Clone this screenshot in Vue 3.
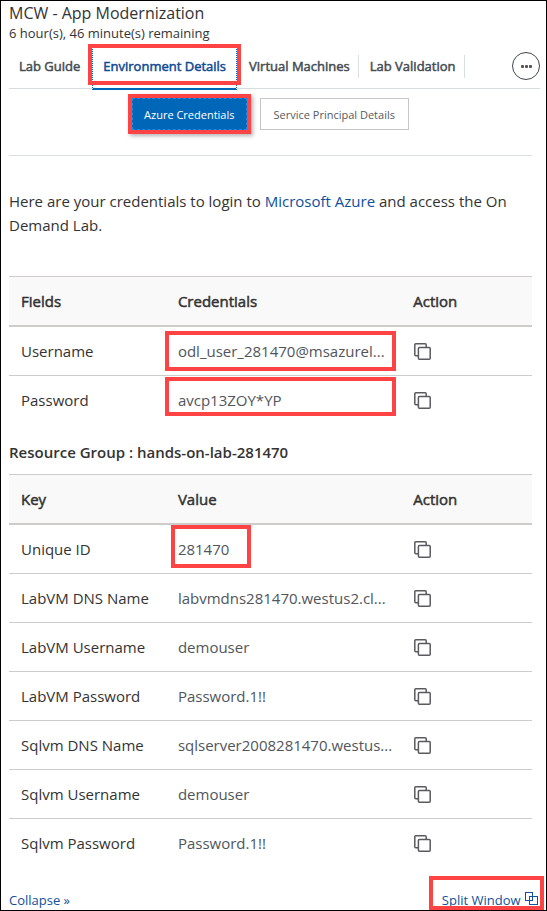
<script setup>
const tabs = [
  { label: 'Lab Guide' },
  { label: 'Environment Details', active: true },
  { label: 'Virtual Machines' },
  { label: 'Lab Validation' },
]

const tables = [
  {
    id: 'credentials',
    head: ['Fields', 'Credentials', 'Action'],
    rows: [
      { name: 'Username', value: 'odl_user_281470@msazurel...', mark: 'mark-user' },
      { name: 'Password', value: 'avcp13ZOY*YP', mark: 'mark-pass' },
    ],
  },
  {
    id: 'resources',
    title: 'Resource Group : hands-on-lab-281470',
    head: ['Key', 'Value', 'Action'],
    rows: [
      { name: 'Unique ID', value: '281470', mark: 'mark-id' },
      { name: 'LabVM DNS Name', value: 'labvmdns281470.westus2.cl...' },
      { name: 'LabVM Username', value: 'demouser' },
      { name: 'LabVM Password', value: 'Password.1!!' },
      { name: 'Sqlvm DNS Name', value: 'sqlserver2008281470.westus...' },
      { name: 'Sqlvm Username', value: 'demouser' },
      { name: 'Sqlvm Password', value: 'Password.1!!' },
    ],
  },
]
</script>

<template>
  <main class="panel">
    <header>
      <h1>MCW - App Modernization</h1>
      <p class="remaining">6 hour(s), 46 minute(s) remaining</p>
    </header>

    <nav class="tabs">
      <a v-for="tab in tabs" :key="tab.label" href="#" class="tab" :class="{ active: tab.active }">{{ tab.label }}</a>
      <button type="button" class="more" aria-label="More">
        <svg width="11" height="3" viewBox="0 0 11 3" fill="#555">
          <rect x="0" y="0" width="3" height="3" rx="1" />
          <rect x="4" y="0" width="3" height="3" rx="1" />
          <rect x="8" y="0" width="3" height="3" rx="1" />
        </svg>
      </button>
    </nav>

    <div class="content">
      <div class="switch">
        <button type="button" class="choice primary">Azure Credentials</button>
        <button type="button" class="choice">Service Principal Details</button>
      </div>

      <p class="intro">Here are your credentials to login to <a href="#">Microsoft Azure</a> and access the On Demand Lab.</p>

      <section v-for="table in tables" :key="table.id">
        <h2 v-if="table.title">{{ table.title }}</h2>
        <table>
          <thead>
            <tr>
              <th v-for="title in table.head" :key="title" scope="col">{{ title }}</th>
            </tr>
          </thead>
          <tbody>
            <tr v-for="row in table.rows" :key="row.name">
              <td>{{ row.name }}</td>
              <td class="value" :class="row.mark">{{ row.value }}</td>
              <td>
                <button type="button" class="copy" :aria-label="'Copy ' + row.name">
                  <svg width="18" height="18" viewBox="0 0 18 18" fill="none" stroke="#5a5a5f" stroke-width="1.5">
                    <path d="M4 12.8H1.8a1 1 0 0 1-1-1V1.8a1 1 0 0 1 1-1h9.4a1 1 0 0 1 1 1V4" />
                    <rect x="4.4" y="4.4" width="11.8" height="11.8" rx="1" />
                  </svg>
                </button>
              </td>
            </tr>
          </tbody>
        </table>
      </section>
    </div>

    <footer>
      <a href="#">Collapse »</a>
      <a href="#" class="split">
        Split Window
        <svg width="13" height="13" viewBox="0 0 13 13" fill="none" stroke="currentColor">
          <rect x="0.5" y="0.5" width="7" height="8" />
          <rect x="4.5" y="4.5" width="8" height="8" />
        </svg>
      </a>
    </footer>
  </main>
</template>

<style>
body {
  margin: 0;
  background: #fff;
}
</style>

<style scoped>
.panel {
  box-sizing: border-box;
  border: 1px solid #000;
  padding: 0 6px 0 8px;
  overflow: hidden;
  font-family: "Open Sans", "Noto Sans", sans-serif;
  font-size: 15px;
  line-height: 24px;
  color: #333;
}

h1, h2, p {
  margin: 0;
}

a {
  color: #10509c;
  text-decoration: none;
}

button {
  font-family: inherit;
  cursor: pointer;
}

h1 {
  padding-top: 1px;
  font-size: 16px;
  font-weight: 400;
  line-height: 22px;
}

.remaining {
  font-size: 13px;
  line-height: 18px;
}

.tabs {
  display: flex;
  align-items: center;
  height: 44px;
  padding-top: 2px;
  border-bottom: 1px solid #d8dcdf;
}

.tab {
  position: relative;
  padding: 0 8px 0 11px;
  border-right: 1px solid #dcdfe2;
  color: #454c52;
  font-size: 13px;
  -webkit-text-stroke: 0.5px currentColor;
  line-height: 23px;
  white-space: nowrap;
}

.tab:first-child {
  padding: 0 11px 0 10px;
  border-right-color: transparent;
}

.tab.active {
  padding-right: 11px;
  color: #0f4a94;
  border-right-color: transparent;
}

.tab.active::before {
  content: "";
  position: absolute;
  inset: -9px 0 -12px 0;
  border: 1px dotted #0067b8;
  border-bottom: 2px solid #0067b8;
}

.tab.active::after {
  content: "";
  position: absolute;
  inset: -11px -4px -7px -4px;
  border: 4px solid #fd4343;
}

.more {
  display: grid;
  place-items: center;
  width: 28px;
  height: 28px;
  margin-left: auto;
  padding: 0;
  border: 1px solid #3f474e;
  border-radius: 50%;
  background: #fff;
}

.content {
  padding-right: 8px;
}

.switch {
  display: flex;
  justify-content: center;
  gap: 13px;
  padding: 9px 0 25px;
  border-bottom: 1px solid #dcdfe2;
}

.choice {
  position: relative;
  height: 32px;
  padding: 0 13px;
  border: 1px solid #c6c6c6;
  background: #fff;
  color: #555c62;
  font-size: 11px;
  white-space: nowrap;
}

.choice.primary {
  padding: 0 11px;
  border: 1px dashed #1a8ce8;
  background: #0067b8;
  color: #fff;
}

.choice.primary::after {
  content: "";
  position: absolute;
  inset: -5px;
  border: 4px solid #fd4343;
  box-shadow: 2px 2px 4px rgba(0, 0, 0, 0.3);
}

.intro {
  padding: 33px 0 39px;
}

h2 {
  padding: 15px 0 10px;
  font-size: 15px;
  font-weight: 600;
  line-height: 24px;
}

table {
  width: 100%;
  table-layout: fixed;
  border-collapse: separate;
  border-spacing: 0;
}

th, td {
  box-sizing: border-box;
  height: 49px;
  padding: 0 12px;
  text-align: left;
  white-space: nowrap;
}

th {
  height: 51px;
  border-top: 1px solid #cfcbcb;
  border-bottom: 2px solid #cfcbcb;
  background: #f9f9f9;
  font-weight: 400;
  -webkit-text-stroke: 0.5px currentColor;
}

th:nth-child(1) {
  width: 30%;
}

th:nth-child(2) {
  width: 45%;
}

td {
  border-bottom: 1px solid #ccc;
}

tbody tr:last-child td {
  border-bottom-color: transparent;
}

.value {
  position: relative;
  color: #50565b;
}

.mark-user::after,
.mark-pass::after,
.mark-id::after {
  content: "";
  position: absolute;
  border: 4px solid #fd4343;
}

.mark-user::after {
  inset: 4px 5px 4px -1px;
}

.mark-pass::after {
  inset: 1px 5px 8px -1px;
}

.mark-id::after {
  inset: 0 auto 5px 5px;
  width: 72px;
}

.copy {
  display: block;
  padding: 2px 0 0 1px;
  border: 0;
  background: none;
}

.copy svg {
  display: block;
}

footer {
  display: flex;
  justify-content: space-between;
  padding: 22px 2px 0 0;
  font-size: 13px;
  line-height: 20px;
}

.split {
  position: relative;
}

.split svg {
  margin-left: 1px;
}

.split::after {
  content: "";
  position: absolute;
  inset: -14px -6px 0 -13px;
  border: 4px solid #fd4343;
}
</style>
